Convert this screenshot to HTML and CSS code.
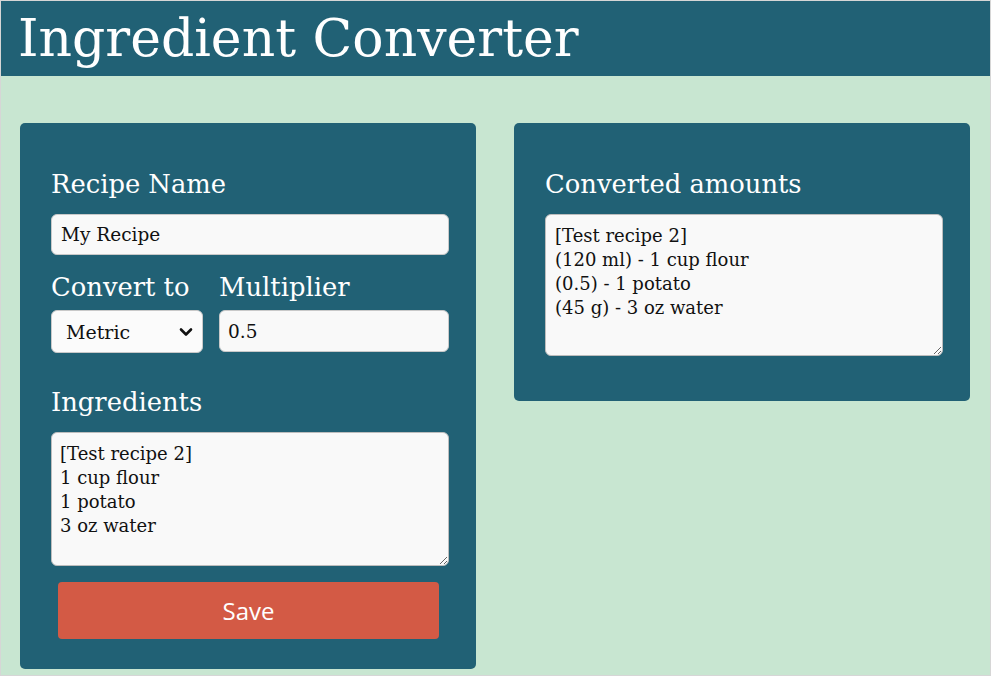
FILE: index.html
```html
<!DOCTYPE html>
<html lang="en">
<head>
<meta charset="utf-8">
<title>Ingredient Converter</title>
<link rel="stylesheet" href="styles.css">
</head>
<body>
<div class="page">
  <header class="header">
    <h1 class="title">Ingredient Converter</h1>
  </header>
  <main class="cards">
    <section class="card card-input">
      <label class="label" for="name">Recipe Name</label>
      <input class="field" id="name" type="text" value="My Recipe">
      <div class="row">
        <div class="col col-select">
          <label class="label label-tight" for="unit">Convert to</label>
          <div class="select-wrap">
            <select class="field select" id="unit">
              <option>Metric</option>
              <option>Imperial</option>
            </select>
            <svg class="chevron" width="14" height="10" viewBox="0 0 14 10" aria-hidden="true">
              <path d="M2 2.5 L7 7.5 L12 2.5" fill="none" stroke="#111" stroke-width="2.6" stroke-linecap="round" stroke-linejoin="round"/>
            </svg>
          </div>
        </div>
        <div class="col col-mult">
          <label class="label label-tight" for="mult">Multiplier</label>
          <input class="field field-mult" id="mult" type="text" value="0.5">
        </div>
      </div>
      <label class="label label-ingr" for="ingr">Ingredients</label>
      <textarea class="area area-ingr" id="ingr">[Test recipe 2]
1 cup flour
1 potato
3 oz water</textarea>
      <button class="save" type="button">Save</button>
    </section>
    <section class="card card-output">
      <label class="label" for="out">Converted amounts</label>
      <textarea class="area area-out" id="out">[Test recipe 2]
(120 ml) - 1 cup flour
(0.5) - 1 potato
(45 g) - 3 oz water</textarea>
    </section>
  </main>
</div>
</body>
</html>
```

FILE: styles.css
```css
* { box-sizing: border-box; }
html, body { margin: 0; padding: 0; }
body {
  background: #c8e6d1;
  font-family: "DejaVu Serif", serif;
  color: #fff;
}
.page {
  width: 991px;
  height: 676px;
  border: 1px solid #d6d6d6;
  overflow: hidden;
}
.header {
  background: #216175;
  height: 75px;
  padding: 0 0 0 17px;
}
.title {
  margin: 0;
  font-weight: normal;
  font-size: 52px;
  line-height: 75px;
  letter-spacing: 0;
}
.cards {
  display: grid;
  grid-template-columns: 456px 456px;
  column-gap: 38px;
  padding: 47px 0 0 19px;
  align-items: start;
}
.card {
  background: #216175;
  border-radius: 5px;
  padding: 46px 27px 30px 31px;
  display: flex;
  flex-direction: column;
}
.card-output { padding-bottom: 45px; }
.label {
  display: block;
  font-size: 25.8px;
  line-height: 30px;
  height: 30px;
  margin-bottom: 15px;
  color: #fff;
  white-space: nowrap;
}
.label-tight { margin-bottom: 8px; }
.label-ingr { margin-top: 34px; }
.field, .area {
  font-family: "DejaVu Serif", serif;
  font-size: 18.5px;
  color: #111;
  background: #f9f9f9;
  border: 1px solid #c9c9c9;
  border-radius: 6px;
  outline: none;
}
.field {
  height: 41px;
  padding: 0 9px;
  width: 100%;
}
.row {
  display: flex;
  gap: 16px;
  margin-top: 17px;
}
.col { display: flex; flex-direction: column; }
.col-select { width: 152px; }
.col-mult { flex: 1; }
.select-wrap { position: relative; }
.select {
  -webkit-appearance: none;
  appearance: none;
  height: 43px;
  padding: 0 30px 0 14px;
  font-size: 19px;
  background: #fbfbfb;
}
.chevron {
  position: absolute;
  right: 10px;
  top: 17px;
  pointer-events: none;
}
.field-mult { height: 42px; padding: 0 8px; }
.area {
  width: 100%;
  font-size: 18px;
  line-height: 24px;
  padding: 9px 8px;
  resize: vertical;
  border-color: #bdbdbd;
}
.area-ingr { height: 134px; }
.area-out { height: 142px; padding: 9px 9px; }
.save {
  margin: 16px 10px 0 7px;
  height: 57px;
  background: #d35a45;
  color: #fff;
  border: none;
  border-radius: 4px;
  font-family: "Open Sans", sans-serif;
  font-size: 24px;
}
```
